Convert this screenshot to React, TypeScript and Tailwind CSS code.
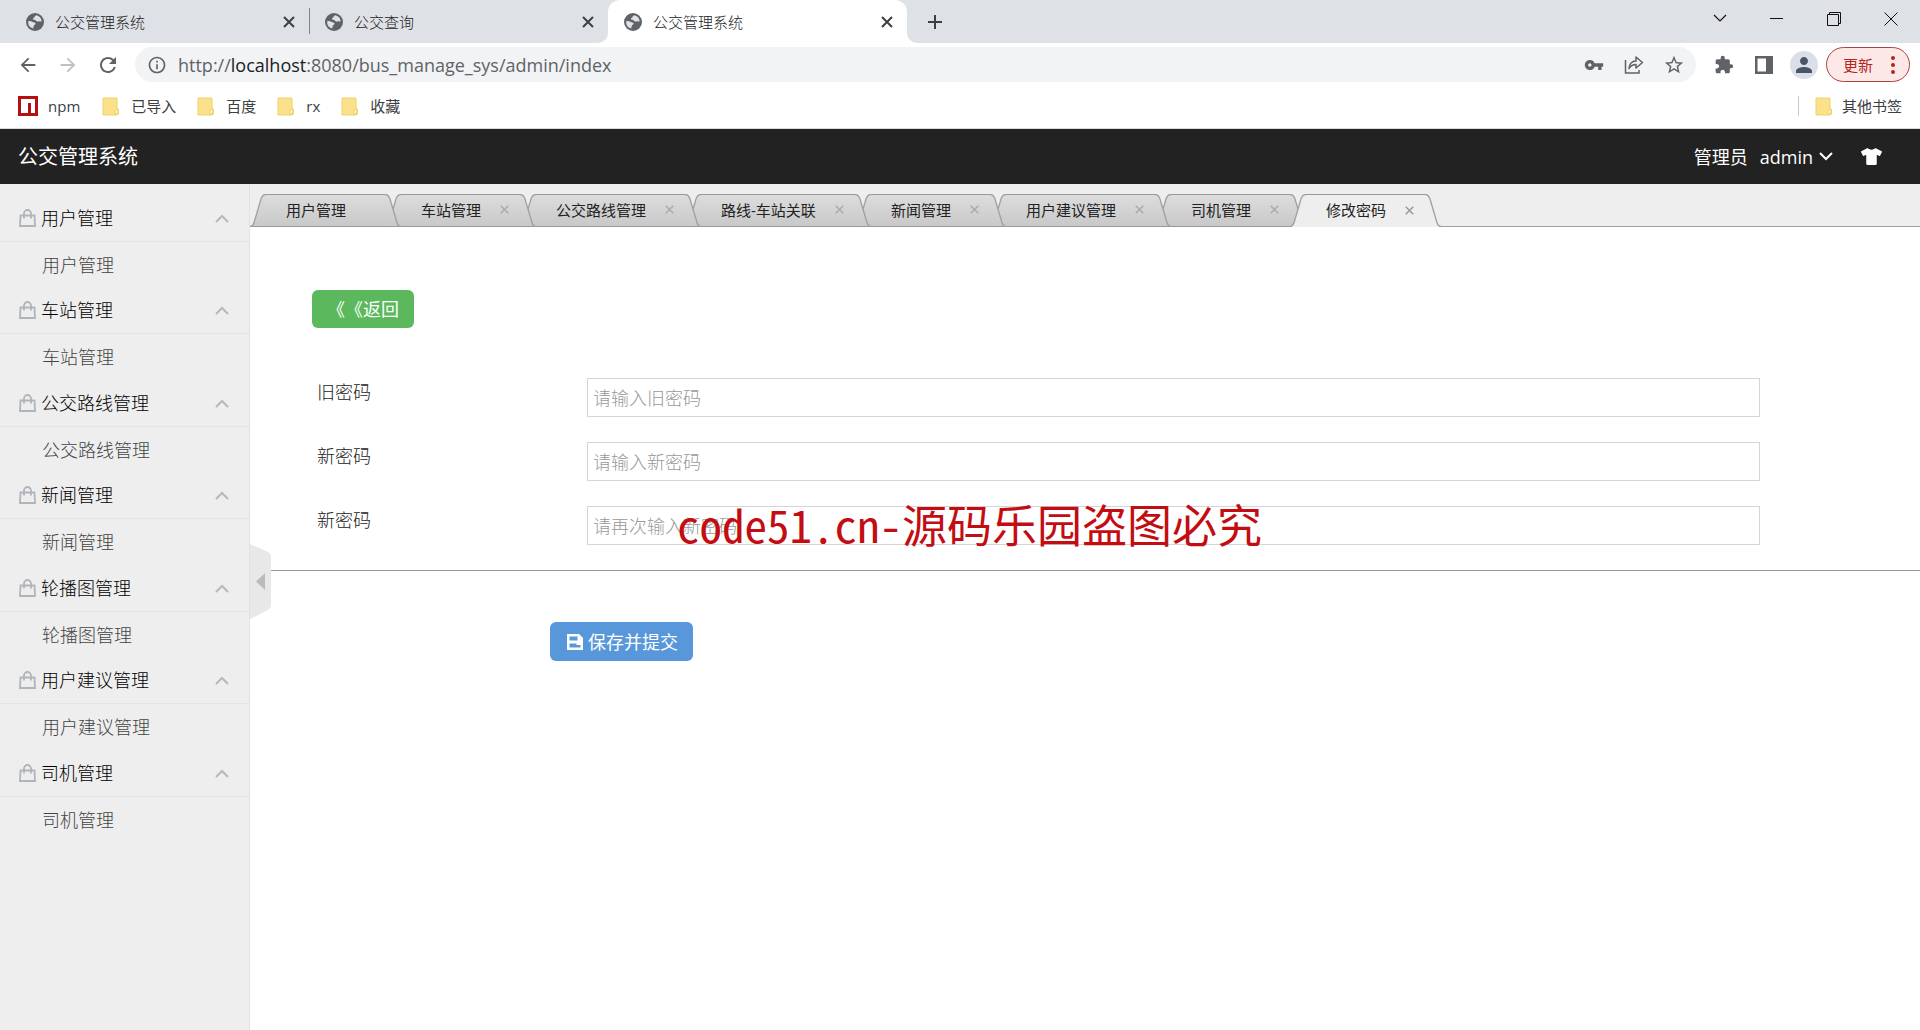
import type { ReactNode } from "react";
import {
  MdArrowBack,
  MdArrowForward,
  MdRefresh,
  MdInfoOutline,
  MdVpnKey,
  MdStarBorder,
  MdExtension,
  MdPerson,
} from "react-icons/md";
import { FaTshirt } from "react-icons/fa";

const browserTabs = [
  { title: "公交管理系统", active: false, divider: true },
  { title: "公交查询", active: false, divider: false },
  { title: "公交管理系统", active: true, divider: false },
];

const bookmarks = ["已导入", "百度", "rx", "收藏"];

const menu = ["用户管理", "车站管理", "公交路线管理", "新闻管理", "轮播图管理", "用户建议管理", "司机管理"];

const pageTabs = [
  "用户管理",
  "车站管理",
  "公交路线管理",
  "路线-车站关联",
  "新闻管理",
  "用户建议管理",
  "司机管理",
  "修改密码",
];

const fields = [
  { id: "old", label: "旧密码", hint: "请输入旧密码" },
  { id: "new", label: "新密码", hint: "请输入新密码" },
  { id: "again", label: "新密码", hint: "请再次输入新密码" },
];

function Cross({ className }: { className: string }) {
  return (
    <svg viewBox="0 0 12 12" className={className} fill="none" stroke="currentColor" strokeWidth="2">
      <path d="M1 1l10 10M11 1l-10 10" />
    </svg>
  );
}

function GlobeIcon() {
  return (
    <svg viewBox="0 0 18 18" className="size-[18px] shrink-0">
      <circle cx="9" cy="9" r="9" fill="#5f6368" />
      <path
        d="M10.500 2.200C9 2.600 8.300 3.500 8.500 4.500c-1.300.2-1.800 1-1.300 2 .8.6 2 .2 2.600.9.500.8 1.600 1.200 2.900 1 1.200-.3 2 .3 2.900.2A6.800 6.800 0 0 0 10.500 2.200z"
        fill="#dee1e6"
      />
      <path
        d="M2.200 8.200c1.600-.4 3.300 0 4.500.8 1.200.4 2.300.2 2.800 1.300.3 1.200-.8 1.700-1.600 2.200-.5.8-.2 1.800-.7 2.900A6.800 6.800 0 0 1 2.200 8.200z"
        fill="#dee1e6"
      />
    </svg>
  );
}

function FolderIcon() {
  return (
    <svg viewBox="0 0 17 19" className="h-[19px] w-[17px] shrink-0">
      <path d="M1 1h14v11h1.500v5l-1.500 1H1z" fill="#fbe28a" stroke="#efd26c" strokeWidth="1" />
      <path d="M13 17.500v-4l1.500-1.500 1.500 1.500v3z" fill="#fdf0b8" stroke="#e8cb62" strokeWidth="0.8" />
    </svg>
  );
}

function NpmIcon() {
  return (
    <svg viewBox="0 0 20 20" className="size-5 shrink-0">
      <path d="M0 0h20v20H0z" fill="#b3100f" />
      <path d="M3 3h14v14h-4V7h-3v10H3z" fill="#fff" />
    </svg>
  );
}

function BagIcon() {
  return (
    <svg viewBox="0 0 17 18" className="h-[18px] w-[17px] shrink-0" fill="none" stroke="#b0b4bb" strokeWidth="1.800">
      <path d="M1.500 6.500h14l.5 10.500H1z" />
      <path d="M5 9.500V4.500a3.500 3.500 0 0 1 7 0v5" />
    </svg>
  );
}

function Chevron({ up, bold, className }: { up?: boolean; bold?: boolean; className: string }) {
  return (
    <svg viewBox="0 0 14 9" className={className} fill="none" stroke="currentColor" strokeWidth={bold ? 2 : 1.2}>
      <path d={up ? "M1 8l6-6 6 6" : "M1 1l6 6 6-6"} />
    </svg>
  );
}

function BrowserTabs() {
  return (
    <div className="flex h-[43px] items-stretch bg-[#dee1e6] pl-2.5 text-[#3c4043]">
      {browserTabs.map((tab, i) => (
        <div
          key={i}
          className={
            tab.active
              ? "relative flex w-[299px] items-center rounded-t-xl bg-white px-4"
              : "relative flex w-[299px] items-center px-4"
          }
        >
          <GlobeIcon />
          <span className="ml-[11px] flex-1 text-[15px] font-light leading-6 text-[#202124]">{tab.title}</span>
          <button aria-label="关闭标签页" className="-mr-1.5 p-1">
            <Cross className="size-3" />
          </button>
          {tab.divider && <span className="absolute -right-px top-2 h-[26px] w-px bg-[#80868b]" />}
          {tab.active && (
            <>
              <svg viewBox="0 0 10 10" className="absolute -left-2.5 bottom-0 size-2.5">
                <path d="M10 0v10H0A10 10 0 0 0 10 0z" fill="#fff" />
              </svg>
              <svg viewBox="0 0 10 10" className="absolute -right-2.5 bottom-0 size-2.5">
                <path d="M0 0v10h10A10 10 0 0 1 0 0z" fill="#fff" />
              </svg>
            </>
          )}
        </div>
      ))}
      <button aria-label="新标签页" className="ml-5 self-center">
        <svg viewBox="0 0 16 16" className="size-4" stroke="currentColor" strokeWidth="2">
          <path d="M8 1v14M1 8h14" />
        </svg>
      </button>
      <div className="ml-auto flex h-[37px] pr-px text-[#111]">
        <button aria-label="搜索标签页" className="flex w-[57px] items-center justify-center">
          <Chevron className="h-[9px] w-3.5" />
        </button>
        <button aria-label="最小化" className="flex w-[57px] items-center justify-center">
          <span className="h-px w-[13px] bg-current" />
        </button>
        <button aria-label="还原" className="flex w-[57px] items-center justify-center">
          <svg viewBox="0 0 14 14" className="size-3.5" fill="none" stroke="currentColor">
            <path d="M.5 2.500h11v11H.5zM2.500 2.500v-2h11v11h-2" />
          </svg>
        </button>
        <button aria-label="关闭" className="flex w-[57px] items-center justify-center">
          <svg viewBox="0 0 14 14" className="size-3.5" stroke="currentColor">
            <path d="M.5.5l13 13M13.500.5l-13 13" />
          </svg>
        </button>
      </div>
    </div>
  );
}

function ToolButton({ label, children }: { label: string; children: ReactNode }) {
  return (
    <button aria-label={label} className="flex w-10 items-center justify-center">
      {children}
    </button>
  );
}

function Toolbar() {
  return (
    <div className="flex h-[45px] items-center bg-white pb-0.5 pl-2 pr-2.5 text-[#5f6368]">
      <ToolButton label="后退">
        <MdArrowBack className="size-[22px]" />
      </ToolButton>
      <ToolButton label="前进">
        <MdArrowForward className="size-[22px] text-[#bdc1c6]" />
      </ToolButton>
      <ToolButton label="刷新">
        <MdRefresh className="size-6" />
      </ToolButton>
      <div className="ml-[7px] flex h-[35px] flex-1 items-center rounded-full bg-[#f1f3f4] pl-3 pr-0.5">
        <MdInfoOutline className="size-5 shrink-0" />
        <span className="ml-[11px] flex-1 text-lg leading-6">
          http://<span className="text-[#202124]">localhost</span>:8080/bus_manage_sys/admin/index
        </span>
        <ToolButton label="密码">
          <MdVpnKey className="size-5" />
        </ToolButton>
        <ToolButton label="分享">
          <svg viewBox="0 0 20 20" className="size-5" fill="none" stroke="currentColor" strokeWidth="1.500">
            <path d="M1.500 5v13H15V15" />
            <path d="M5 13.500c.3-4.500 3-7.500 7-7.500V2l6.500 5.500-6.500 5.500V9.500c-3 0-5.500 1.500-7 4z" strokeLinejoin="round" />
          </svg>
        </ToolButton>
        <ToolButton label="收藏">
          <MdStarBorder className="size-[22px]" />
        </ToolButton>
      </div>
      <div className="ml-2 flex items-center">
        <ToolButton label="扩展程序">
          <MdExtension className="size-5" />
        </ToolButton>
        <ToolButton label="侧边栏">
          <svg viewBox="0 0 18 18" className="size-[18px]" fill="currentColor">
            <path d="M0 0h18v18H0zM2.500 2.500v13h8.500v-13z" fillRule="evenodd" />
          </svg>
        </ToolButton>
        <ToolButton label="个人资料">
          <span className="flex size-7 items-center justify-center rounded-full bg-[#dadfe9]">
            <MdPerson className="size-6 text-[#4a5568]" />
          </span>
        </ToolButton>
      </div>
      <button className="ml-0.5 flex h-[35px] w-[84px] items-center justify-between rounded-full border border-[#b3413b] bg-[#fce8e6] pl-4 pr-3.5 text-[15px] leading-6 text-[#b3261e]">
        更新
        <svg viewBox="0 0 4 18" className="h-[18px] w-1" fill="currentColor">
          <circle cx="2" cy="2" r="2" />
          <circle cx="2" cy="9" r="2" />
          <circle cx="2" cy="16" r="2" />
        </svg>
      </button>
    </div>
  );
}

function BookmarkBar() {
  return (
    <div className="flex h-[41px] items-center gap-[21px] border-b border-[#dcdcdc] bg-white pb-1 pl-[18px] pr-[18px] text-[15px] leading-6 text-[#3c4043]">
      <a href="#npm" className="mr-px flex items-center gap-2.5">
        <NpmIcon />
        npm
      </a>
      {bookmarks.map((name) => (
        <a key={name} href={"#" + name} className="flex items-center gap-3">
          <FolderIcon />
          {name}
        </a>
      ))}
      <a href="#other" className="ml-auto flex items-center gap-2.5">
        <span className="mr-1.5 h-5 w-px bg-[#c8ccd1]" />
        <FolderIcon />
        其他书签
      </a>
    </div>
  );
}

function Sidebar() {
  return (
    <nav className="w-[250px] shrink-0 border-r border-[#e2e2e2] bg-[#eee] pt-[11px] text-lg font-light leading-6">
      {menu.map((name) => (
        <section key={name} className="group">
          <button className="flex h-[47px] w-full items-center border-b border-[#e4e4e4] pl-[19px] pr-5 text-black">
            <BagIcon />
            <span className="ml-[5px] flex-1 text-left">{name}</span>
            <Chevron up bold className="h-[9px] w-3.5 text-[#b8b8b8]" />
          </button>
          <a href={"#" + name} className="flex h-[45px] items-center pl-[42px] text-[#444] group-even:h-[46px]">
            {name}
          </a>
        </section>
      ))}
    </nav>
  );
}

const tabLayer = ["z-[8]", "z-[7]", "z-[6]", "z-[5]", "z-[4]", "z-[3]", "z-[2]", "z-[9]"];

function TabEdge({ right, active }: { right?: boolean; active: boolean }) {
  const line = right
    ? "M0 .5C3 .5 4 2 5 5L11.500 27C12.500 31 13.500 32.500 16 32.500"
    : "M16 .5C13 .5 12 2 11 5L4.500 27C3.500 31 2.500 32.500 0 32.500";
  const id = "edge" + (right ? "R" : "L") + (active ? "A" : "N");
  return (
    <svg viewBox="0 0 16 33" className="h-[33px] w-4 shrink-0">
      <defs>
        <linearGradient id={id} x1="0" y1="0" x2="0" y2="1">
          <stop offset="0" stopColor={active ? "#eeeeee" : "#dddddd"} />
          <stop offset="1" stopColor={active ? "#eeeeee" : "#c8c8c8"} />
        </linearGradient>
      </defs>
      <path d={line + (right ? "V33H0z" : "V33H16z")} fill={"url(#" + id + ")"} />
      {!active && <path d={right ? "M0 32.500H14" : "M2 32.500H16"} stroke="#999" />}
      <path d={line} fill="none" stroke="#a0a0a0" strokeWidth="1.300" />
    </svg>
  );
}

function PageTabs() {
  return (
    <div className="flex h-[43px] items-end border-b border-[#a0a0a0] bg-[#eee]">
      {pageTabs.map((name, i) => {
        const active = i === pageTabs.length - 1;
        return (
          <div key={name} className={"relative -mb-px -mr-4 flex h-[33px] " + tabLayer[i]}>
            <TabEdge active={active} />
            <div
              className={
                active
                  ? "flex items-center border-t border-[#999] bg-[#eee] pb-0.5 pl-5"
                  : "flex items-center border-y border-[#999] bg-linear-to-b from-[#ddd] to-[#c8c8c8] pb-0.5 pl-5"
              }
            >
              <button className="whitespace-nowrap text-[15px] leading-6 text-[#222]">{name}</button>
              {i === 0 ? (
                <span className="w-[39px]" />
              ) : (
                <button aria-label={"关闭" + name} className="flex w-[39px] items-center pl-[19px]">
                  <Cross className={active ? "size-[9px] text-[#999]" : "size-[9px] text-[#aaa]"} />
                </button>
              )}
            </div>
            <TabEdge right active={active} />
          </div>
        );
      })}
    </div>
  );
}

function PasswordForm() {
  return (
    <form className="text-lg font-light leading-6 text-[#222]">
      <div className="relative border-b border-[#999] pb-[25px] pl-[62px] pr-40 pt-[63px]">
        <button
          type="button"
          className="h-[38px] w-[102px] rounded-md bg-[#5cb85c] text-center font-normal text-white [text-spacing-trim:space-all]"
        >
          《《返回
        </button>
        <div className="mt-[50px] flex flex-col gap-[25px]">
          {fields.map((f) => (
            <div key={f.id} className="flex">
              <label htmlFor={f.id} className="w-[275px] shrink-0 pl-[5px] pt-0.5">
                {f.label}
              </label>
              <input
                id={f.id}
                type="password"
                placeholder={f.hint}
                className="h-[39px] min-w-0 flex-1 border border-[#d5d5d5] bg-white px-[5px] placeholder:text-[#999]"
              />
            </div>
          ))}
        </div>
        <p className="pointer-events-none absolute bottom-4 left-[427px] whitespace-nowrap font-['Noto_Sans_CJK_SC',sans-serif] text-[45px] font-normal leading-[60px] text-[#c30d12]">
          <span className="[font-feature-settings:'hwid']">code51.cn-</span>源码乐园盗图必究
        </p>
      </div>
      <button
        type="button"
        className="ml-[300px] mt-[51px] flex h-[39px] w-[143px] items-center justify-center gap-[5px] rounded-md bg-[#5897da] pl-0.5 font-normal text-white"
      >
        <svg viewBox="0 0 16 16" className="size-4 shrink-0" fill="currentColor">
          <path d="M0 0h12l4 4v12H0zM2.500 2.500v4h8v-4zM2.500 9.500v4h11v-2.500h-4V9.500z" fillRule="evenodd" />
        </svg>
        保存并提交
      </button>
    </form>
  );
}

export default function App() {
  return (
    <div className="flex min-h-screen flex-col overflow-hidden bg-white font-['Open_Sans','Noto_Sans_CJK_SC',sans-serif]">
      <BrowserTabs />
      <Toolbar />
      <BookmarkBar />
      <header className="flex h-[55px] items-center bg-[#222] pl-[18px] pr-[38px] text-lg leading-6 text-white">
        <h1 className="flex-1 text-xl">公交管理系统</h1>
        <span>管理员</span>
        <button className="ml-3 flex items-center gap-1.5">
          admin
          <Chevron bold className="h-[9px] w-3.5" />
        </button>
        <button aria-label="换肤" className="ml-7">
          <FaTshirt className="size-[21px]" />
        </button>
      </header>
      <div className="flex flex-1">
        <Sidebar />
        <main className="relative min-w-0 flex-1">
          <PageTabs />
          <PasswordForm />
          <button aria-label="收起菜单" className="absolute left-0 top-[360px]">
            <svg viewBox="0 0 22 75" className="h-[75px] w-[22px]">
              <path d="M0 0l18 8q3 1.500 3 5v48q0 3-3 5L0 75z" fill="#e8e8e8" />
              <path d="M15 29v17l-9-8.500z" fill="#bbb" />
            </svg>
          </button>
        </main>
      </div>
    </div>
  );
}
